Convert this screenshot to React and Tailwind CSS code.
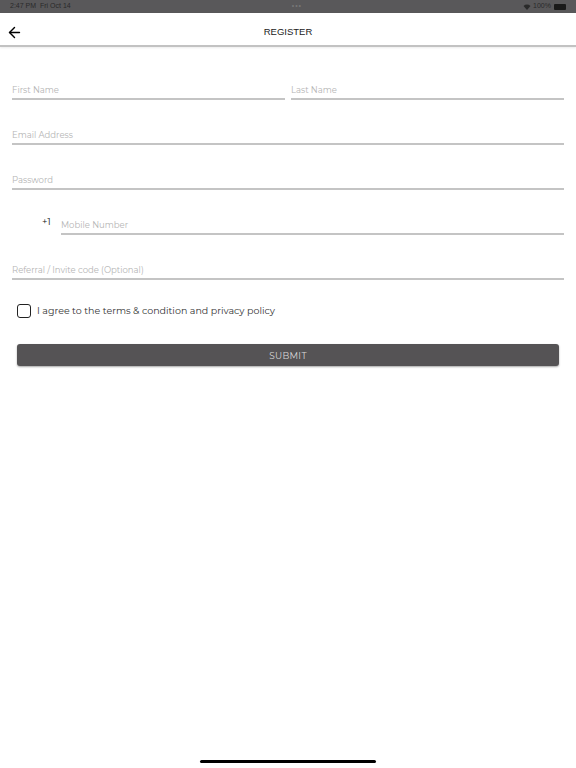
import { ArrowLeft } from "lucide-react";

const font = { fontFamily: "Montserrat, Lato, 'Noto Sans', sans-serif" };

function Field({ label, className = "" }) {
  return (
    <div className={`flex flex-col ${className}`}>
      <span className="text-[8.5px] leading-[11px] text-[#b4b4b4] pb-[2px]">{label}</span>
      <div className="h-[2px] bg-[#c4c4c4]" />
    </div>
  );
}

export default function App() {
  return (
    <div className="w-[576px] h-[768px] bg-white flex flex-col relative overflow-hidden" style={font}>
      {/* status bar */}
      <div className="h-[13px] bg-[#59585a] flex items-center justify-between px-[10px] text-[7px] text-[#2a2a2a] font-['Liberation_Sans',sans-serif]">
        <span>2:47 PM&nbsp;&nbsp;Fri Oct 14</span>
        <span className="text-[#777] tracking-[1px]">•••</span>
        <div className="flex items-center gap-[2px]">
          <svg width="8" height="6" viewBox="0 0 8 6">
            <path d="M0.5 2 A5 5 0 0 1 7.5 2 L4 6 Z" fill="#2a2a2a" />
          </svg>
          <span>100%</span>
          <div className="w-[12px] h-[6px] rounded-[1px] bg-[#1a1a1a] ml-[1px]" />
        </div>
      </div>

      {/* header */}
      <div className="h-[34px] flex items-center relative pt-[7px] border-b-2 border-[#c2c2c2] shadow-[0_1px_2px_rgba(0,0,0,0.08)]">
        <ArrowLeft className="absolute left-[6px] top-[11px] w-[17px] h-[17px] text-black" strokeWidth={2} />
        <span className="mx-auto text-[9.5px] text-[#222] font-['Liberation_Sans',sans-serif]">REGISTER</span>
      </div>

      {/* form */}
      <div className="flex flex-col px-[12px] pt-[38px]">
        <div className="flex gap-[6px]">
          <Field label="First Name" className="flex-1" />
          <Field label="Last Name" className="flex-1" />
        </div>
        <Field label="Email Address" className="mt-[30px]" />
        <Field label="Password" className="mt-[30px]" />
        <div className="flex mt-[27px] pl-[30px]">
          <span className="text-[9.5px] text-[#111] leading-[11px] w-[19px] -mt-[1px]">+1</span>
          <Field label="Mobile Number" className="flex-1 mt-[3px]" />
        </div>
        <Field label="Referral / Invite code (Optional)" className="mt-[30px]" />

        <div className="flex items-center gap-[6px] mt-[24px] pl-[5px]">
          <div className="w-[14px] h-[14px] border-[1.5px] border-[#222] rounded-[3px]" />
          <span className="text-[9.5px] text-[#333]">I agree to the terms &amp; condition and privacy policy</span>
        </div>

        <div className="mx-[5px] mt-[26px] h-[22px] bg-[#555355] rounded-[3px] shadow-[0_1px_2px_rgba(0,0,0,0.35)] flex items-center justify-center">
          <span className="text-[9px] text-[#d8d8d8] tracking-[0.3px]">SUBMIT</span>
        </div>
      </div>

      {/* home indicator */}
      <div className="absolute bottom-[5px] left-[200px] w-[176px] h-[3px] rounded-full bg-black" />
    </div>
  );
}
